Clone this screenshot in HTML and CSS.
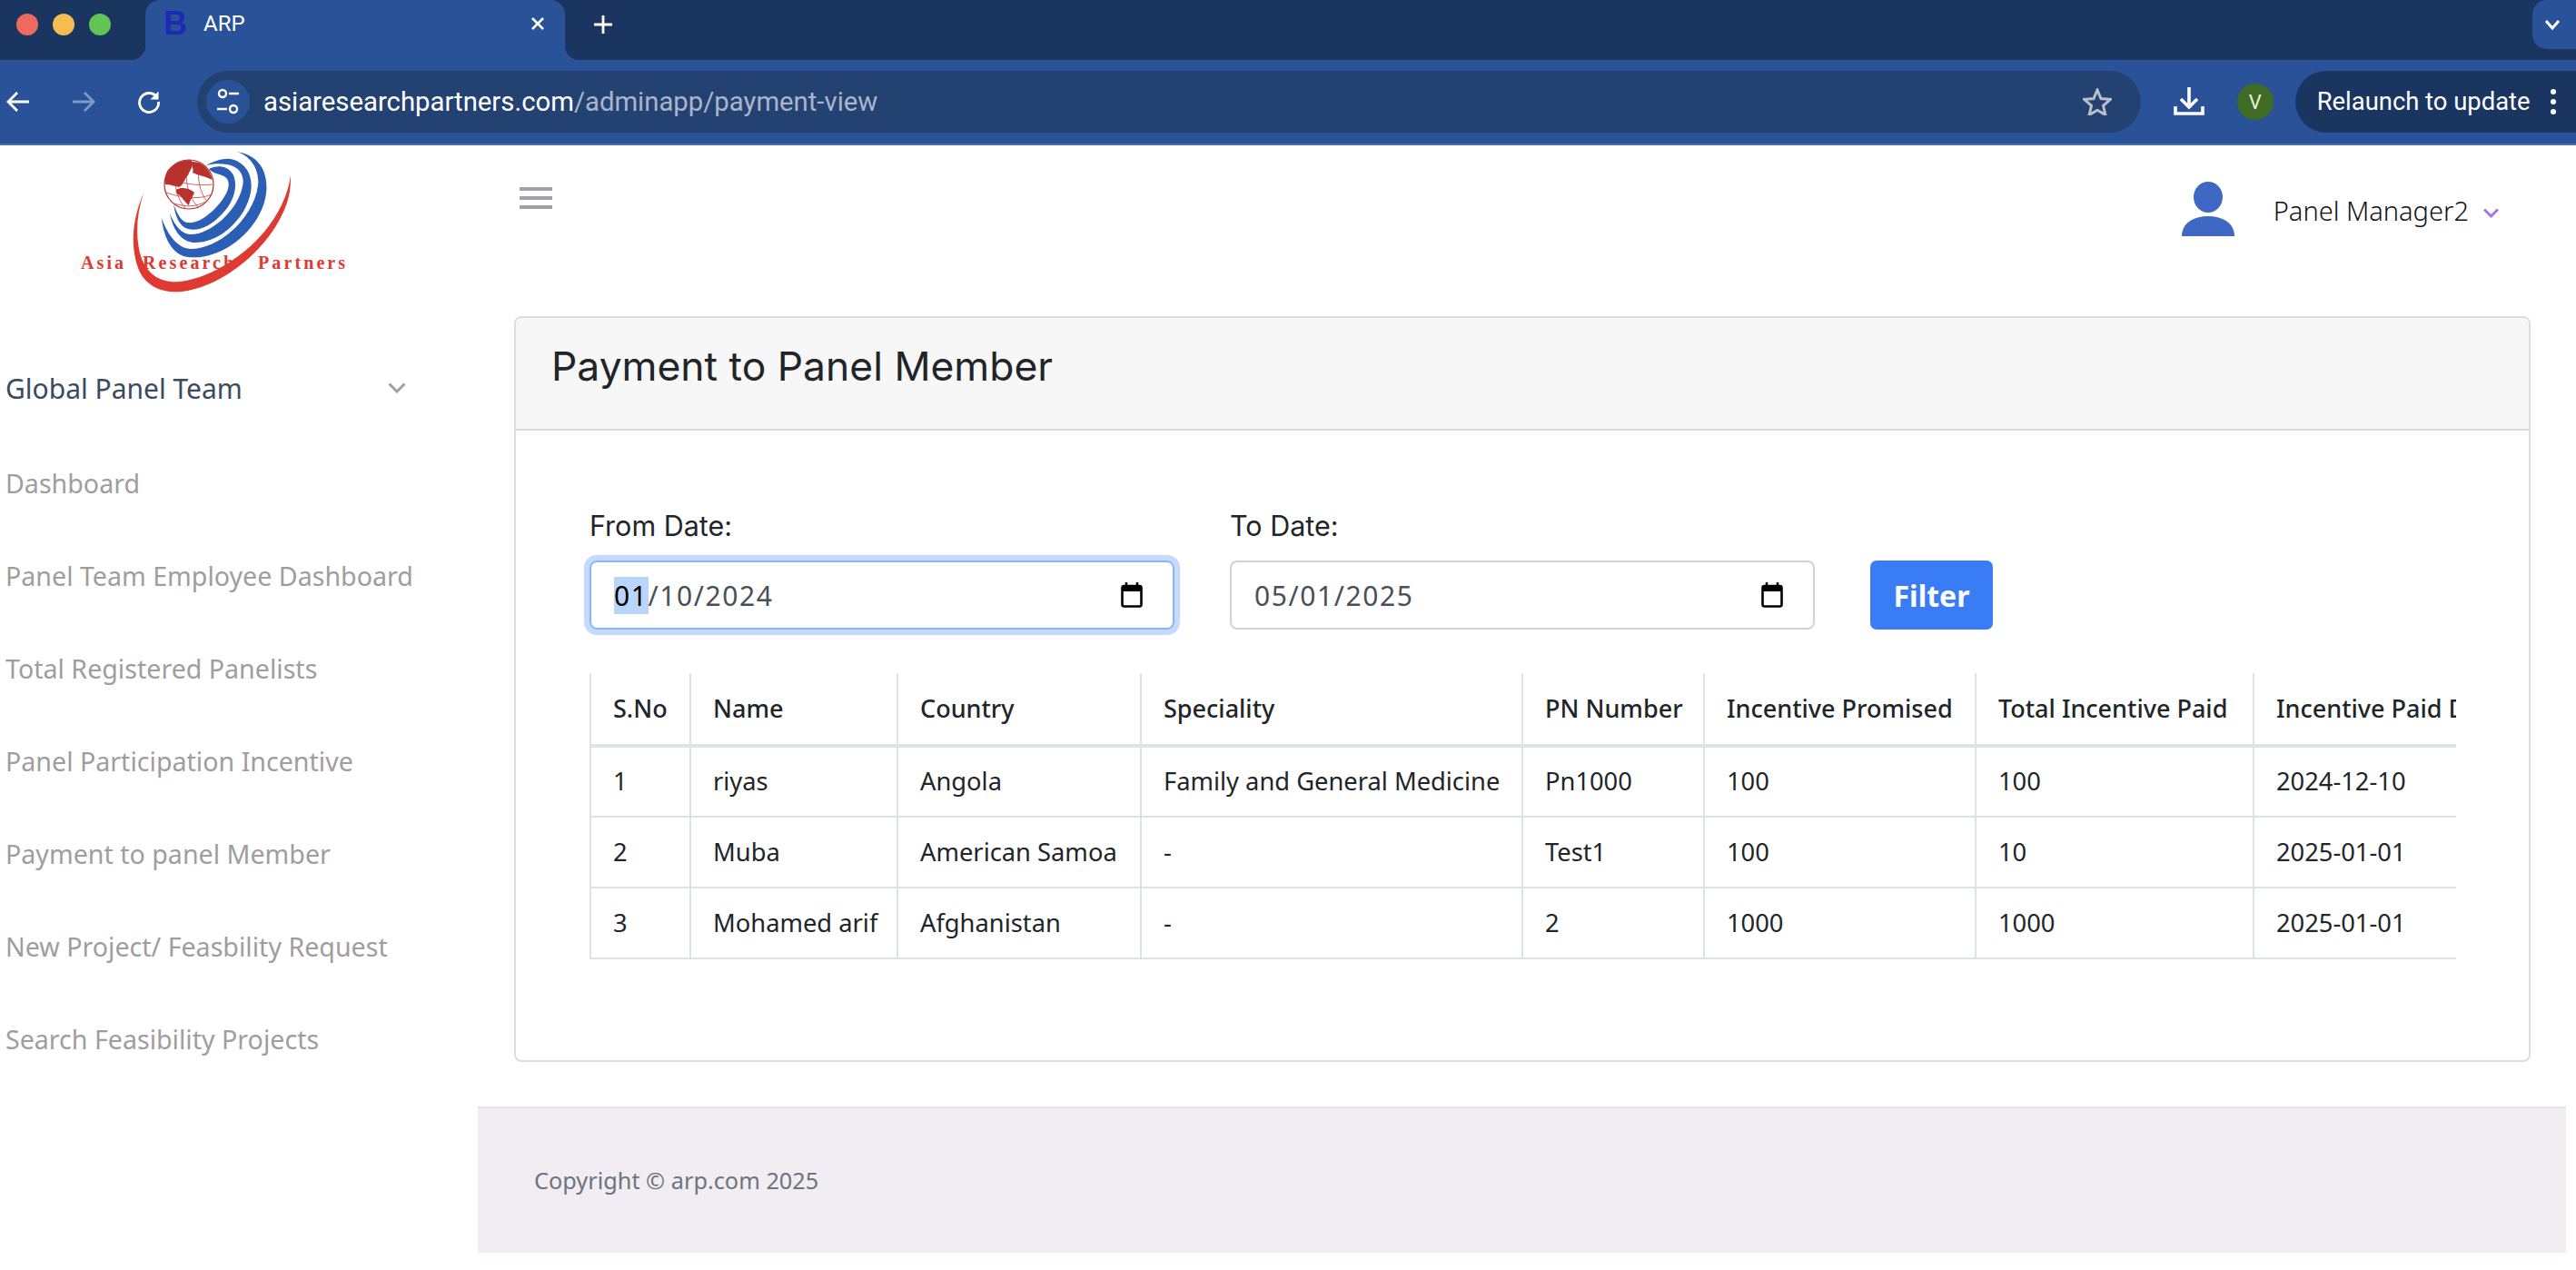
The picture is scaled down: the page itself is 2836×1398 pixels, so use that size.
FILE: index.html
```html
<!DOCTYPE html>
<html lang="en">
<head>
<meta charset="utf-8">
<title>ARP</title>
<link rel="stylesheet" href="styles.css">
</head>
<body>
<header class="chrome">
  <div class="tabstrip">
    <div class="lights"><span class="light red"></span><span class="light yellow"></span><span class="light green"></span></div>
    <div class="tab">
      <span class="favicon">B</span>
      <span class="tab-title">ARP</span>
      <svg class="tab-close" width="16" height="16" viewBox="0 0 16 16"><path d="M2 2l12 12M14 2L2 14" stroke="#fff" stroke-width="2.6" fill="none"/></svg>
    </div>
    <svg class="newtab" width="22" height="22" viewBox="0 0 22 22"><path d="M11 1v20M1 11h20" stroke="#fff" stroke-width="2.8"/></svg>
    <div class="tabsearch"><svg width="18" height="12" viewBox="0 0 18 12"><path d="M2 2l7 8 7-8" stroke="#fff" stroke-width="3" fill="none"/></svg></div>
  </div>
  <div class="toolbar">
    <svg class="navicon" width="26" height="26" viewBox="0 0 26 26"><path d="M25 13H3M12 3L2 13l10 10" stroke="#fff" stroke-width="2.8" fill="none"/></svg>
    <svg class="navicon dim" width="26" height="26" viewBox="0 0 26 26"><path d="M1 13h22M14 3l10 10-10 10" stroke="#7f9ac6" stroke-width="2.8" fill="none"/></svg>
    <svg class="navicon" width="26" height="26" viewBox="0 0 26 26"><path d="M22 8.5A10.5 10.5 0 1 0 23.500 13" stroke="#fff" stroke-width="2.8" fill="none"/><path d="M23.500 1.500v9h-9z" fill="#fff"/></svg>
    <div class="omnibox">
      <span class="siteinfo"><svg width="26" height="32" viewBox="0 0 26 32"><circle cx="7" cy="7" r="4" stroke="#fff" stroke-width="2.400" fill="none"/><path d="M14 7h11M1 24h11" stroke="#fff" stroke-width="2.600"/><circle cx="19" cy="24" r="4" stroke="#fff" stroke-width="2.400" fill="none"/></svg></span>
      <span class="url">asiaresearchpartners.com<span class="url-path">/adminapp/payment-view</span></span>
      <svg class="star" width="32" height="30" viewBox="0 0 32 30"><path d="M16 2l4 9.500 10.500.9-8 6.900 2.400 10.200L16 24.200 7.100 29.500l2.400-10.200-8-6.900L12 11.500z" fill="none" stroke="#b9bec8" stroke-width="3"/></svg>
    </div>
    <svg class="download" width="34" height="32" viewBox="0 0 34 32"><path d="M17 0v21M8 13l9 9 9-9" stroke="#fff" stroke-width="3.600" fill="none"/><path d="M2 21v8h30v-8" stroke="#fff" stroke-width="3.600" fill="none"/></svg>
    <span class="avatar">V</span>
    <div class="relaunch"><span>Relaunch to update</span><span class="dots"><i></i><i></i><i></i></span></div>
  </div>
</header>

<div class="app">
  <aside class="sidebar">
    <div class="logo">
      <svg width="330" height="172" viewBox="60 160 330 172">
        <path d="M260 167C284 170 296 188 293 213C288 252 245 287 207 283C190 281 180 262 178 240C184 258 196 274 210 274C243 274 280 238 284 204C286 187 276 171 260 167Z" fill="#2b5fb5"/>
        <path d="M227 182C238 176 250 173 258 176C271 181 279 193 276 212C270 242 241 268 213 267C199 266 190 252 187 235C193 250 201 258 210 258C233 258 262 231 267 205C270 193 263 183 250 181C243 180 235 180 227 182Z" fill="#2b5fb5"/>
        <path d="M230 186C240 181 252 183 257 193C262 205 258 222 244 236C232 249 218 255 207 252C198 250 193 238 191 225C196 238 201 245 207 245C220 247 240 230 249 213C254 203 252 195 244 193C240 191 235 191 230 186Z" fill="#2b5fb5"/>
        <path d="M158 213C146 240 143 270 152 295C160 316 180 323 200 321C245 316 300 272 316 223C320 212 320 200 320 193C317 216 304 243 282 265C256 291 224 307 198 310C178 312 162 303 155 282C149 262 150 236 158 213Z" fill="#de3a31"/>
        <circle cx="208" cy="203" r="27" fill="#fff" stroke="#b8312c" stroke-width="1.200"/>
        <g fill="none" stroke="#c9534e" stroke-width="0.900">
          <path d="M182 196C200 202 218 205 234 203M183 212C200 218 220 220 233 214M192 224C204 228 216 228 226 222"/>
          <path d="M196 178C190 195 192 215 204 229M208 176C202 195 206 215 218 228M220 179C216 195 220 212 228 222"/>
        </g>
        <path d="M185 187C192 179 203 176 210 176C215 181 209 187 207 193C203 196 203 203 197 206C192 205 188 203 182 203C181 197 182 192 185 187Z" fill="#b8312c"/>
        <path d="M211 178C222 177 231 186 234 198C226 194 218 193 212 190C214 186 210 182 211 178Z" fill="#b8312c"/>
        <path d="M194 209C200 205 210 208 214 212C212 217 209 220 208 226C204 223 200 217 198 215C195 214 193 212 194 209Z" fill="#b8312c"/>
        <text class="logo-text" x="89" y="296">Asia</text>
        <text class="logo-text" x="157" y="296">Research</text>
        <text class="logo-text" x="284" y="296">Partners</text>
      </svg>
    </div>
    <nav class="menu">
      <div class="menu-head"><span>Global Panel Team</span><svg width="20" height="12" viewBox="0 0 20 12"><path d="M1.500 1.500L10 10l8.500-8.500" stroke="#a0a0a2" stroke-width="3" fill="none"/></svg></div>
      <a class="menu-item">Dashboard</a>
      <a class="menu-item">Panel Team Employee Dashboard</a>
      <a class="menu-item">Total Registered Panelists</a>
      <a class="menu-item">Panel Participation Incentive</a>
      <a class="menu-item">Payment to panel Member</a>
      <a class="menu-item">New Project/ Feasbility Request</a>
      <a class="menu-item">Search Feasibility Projects</a>
    </nav>
  </aside>

  <main class="main">
    <div class="topbar">
      <div class="burger"><i></i><i></i><i></i></div>
      <div class="user">
        <svg width="58" height="60" viewBox="0 0 58 60"><ellipse cx="29" cy="17" rx="16" ry="17" fill="#3f67c4"/><path d="M0 60C0 46 12 38 29 38S58 46 58 60Z" fill="#3f67c4"/></svg>
        <span class="user-name">Panel Manager2</span>
        <svg width="17" height="11" viewBox="0 0 17 11"><path d="M1 1.500l7.500 7.500L16 1.500" stroke="#a874ee" stroke-width="3" fill="none"/></svg>
      </div>
    </div>

    <section class="card">
      <div class="card-head"><h1>Payment to Panel Member</h1></div>
      <div class="card-body">
        <form class="filters">
          <div class="field">
            <label class="field-label">From Date:</label>
            <div class="date focus">
              <span class="date-text"><mark>01</mark>/10/2024</span>
              <svg width="24" height="28" viewBox="0 0 24 28"><path d="M6 0v5M18 0v5" stroke="#000" stroke-width="2.500"/><rect x="1.500" y="4" width="21" height="22.500" rx="2" fill="none" stroke="#000" stroke-width="2.600"/><rect x="1.500" y="4" width="21" height="6" fill="#000"/></svg>
            </div>
          </div>
          <div class="field">
            <label class="field-label">To Date:</label>
            <div class="date">
              <span class="date-text">05/01/2025</span>
              <svg width="24" height="28" viewBox="0 0 24 28"><path d="M6 0v5M18 0v5" stroke="#000" stroke-width="2.500"/><rect x="1.500" y="4" width="21" height="22.500" rx="2" fill="none" stroke="#000" stroke-width="2.600"/><rect x="1.500" y="4" width="21" height="6" fill="#000"/></svg>
            </div>
          </div>
          <button class="filter-btn" type="button">Filter</button>
        </form>
        <div class="table-wrap">
          <table class="data">
            <colgroup>
              <col class="c1"><col class="c2"><col class="c3"><col class="c4"><col class="c5"><col class="c6"><col class="c7"><col class="c8">
            </colgroup>
            <thead>
              <tr><th>S.No</th><th>Name</th><th>Country</th><th>Speciality</th><th>PN Number</th><th>Incentive Promised</th><th>Total Incentive Paid</th><th>Incentive Paid Date</th></tr>
            </thead>
            <tbody>
              <tr><td>1</td><td>riyas</td><td>Angola</td><td>Family and General Medicine</td><td>Pn1000</td><td>100</td><td>100</td><td>2024-12-10</td></tr>
              <tr><td>2</td><td>Muba</td><td>American Samoa</td><td>-</td><td>Test1</td><td>100</td><td>10</td><td>2025-01-01</td></tr>
              <tr><td>3</td><td>Mohamed arif</td><td>Afghanistan</td><td>-</td><td>2</td><td>1000</td><td>1000</td><td>2025-01-01</td></tr>
            </tbody>
          </table>
        </div>
      </div>
    </section>

    <footer class="footer">Copyright © arp.com 2025</footer>
  </main>
</div>
</body>
</html>
```
FILE: styles.css
```css
* { box-sizing: border-box; }
html, body { margin: 0; height: 100%; overflow: hidden; background: #fff; }
body { font-family: "Noto Sans", sans-serif; color: #212529; }

/* Browser chrome */
.chrome { height: 160px; background: #2a5298; border-bottom: 2px solid #4a70a8; }
.tabstrip { height: 66px; background: #1a3560; display: flex; align-items: flex-start; padding-left: 18px; }
.lights { display: flex; gap: 16px; width: 142px; padding-top: 15px; }
.light { width: 24px; height: 24px; border-radius: 50%; }
.red { background: #ee6a5f; }
.yellow { background: #f5bd4f; }
.green { background: #61c454; }
.tab { position: relative; width: 462px; height: 66px; background: #2a5298; border-radius: 16px 16px 0 0; display: flex; align-items: center; padding: 0 22px 14px 20px; }
.tab::before, .tab::after { content: ""; position: absolute; bottom: 0; width: 16px; height: 16px; }
.tab::before { left: -16px; background: radial-gradient(circle at 0 0, #1a3560 16px, #2a5298 16.5px); }
.tab::after { right: -16px; background: radial-gradient(circle at 100% 0, #1a3560 16px, #2a5298 16.5px); }
.favicon { font: 700 36px "Liberation Sans", sans-serif; color: #1c2bb5; width: 44px; }
.tab-title { font: 400 24px Roboto, sans-serif; color: #fff; flex: 1; }
.newtab { margin: 16px 0 0 31px; }
.tabsearch { margin-left: auto; width: 48px; height: 54px; background: #2a5298; border-radius: 16px 0 0 16px; display: flex; align-items: center; justify-content: center; padding-right: 4px; }

.toolbar { height: 92px; display: flex; align-items: center; padding-left: 7px; }
.navicon { margin-right: 46px; flex: none; }
.omnibox { width: 2145px; height: 68px; margin-left: -6px; background: #234272; border-radius: 34px; display: flex; align-items: center; padding: 0 32px 0 10px; }
.siteinfo { width: 48px; height: 48px; border-radius: 50%; background: #2a5298; display: flex; align-items: center; justify-content: center; flex: none; }
.url { font: 400 29.3px Roboto, sans-serif; color: #fff; margin-left: 15px; flex: 1; white-space: nowrap; }
.url-path { color: #a9b5ca; }
.download { margin-left: 36px; flex: none; }
.avatar { width: 40px; height: 40px; border-radius: 50%; background: #3f6b24; color: #e6efdc; font: 400 22px Roboto, sans-serif; display: flex; align-items: center; justify-content: center; margin-left: 36px; flex: none; }
.relaunch { width: 310px; height: 68px; margin-left: 24px; background: #1a3560; border-radius: 34px 0 0 34px; display: flex; align-items: center; padding-left: 24px; color: #fff; font: 400 27.4px Roboto, sans-serif; white-space: nowrap; }
.dots { display: flex; flex-direction: column; gap: 5px; margin-left: 22px; }
.dots i { width: 6px; height: 6px; border-radius: 50%; background: #fff; }

/* App */
.app { display: flex; height: 1238px; }
.sidebar { width: 526px; flex: none; }
.logo { height: 172px; }
.logo svg { display: block; margin-left: 60px; }
.logo-text { font: 700 20px "Liberation Serif", serif; letter-spacing: 3.100px; fill: #de3a31; }
.menu { padding: 65px 0 0 6px; display: flex; flex-direction: column; }
.menu-head { display: flex; align-items: center; justify-content: space-between; width: 441px; height: 60px; font-size: 30px; color: #3a4a60; margin-bottom: 44px; }
.menu-item { height: 60px; margin-bottom: 42px; display: flex; align-items: center; font-size: 28.600px; color: #a19c9e; white-space: nowrap; }

.main { width: 2299px; flex: none; display: flex; flex-direction: column; }
.topbar { height: 188px; display: flex; justify-content: space-between; padding: 46px 74px 0 46px; }
.burger { display: flex; flex-direction: column; gap: 6px; width: 36px; }
.burger i { display: block; height: 4px; background: #a0a0a8; }
.user { display: flex; align-items: flex-start; height: 60px; margin-top: -6px; }
.user-name { font-size: 29px; font-weight: 300; color: #111; margin: 12px 16px 0 43px; line-height: 40px; white-space: nowrap; }
.user svg:last-child { margin-top: 29px; }

.card { margin: 0 39px 49px 40px; height: 821px; border: 2px solid #dcdde0; border-radius: 8px; overflow: hidden; flex: none; }
.card-head { height: 124px; background: #f7f7f7; border-bottom: 2px solid #dadada; display: flex; align-items: center; padding: 0 0 16px 39px; }
.card-head h1 { margin: 0; font: 400 44.400px Inter, sans-serif; color: #212529; }
.card-body { padding: 85px 80px 0 81px; }
.filters { display: flex; align-items: flex-end; gap: 61px; }
.field { width: 644px; display: flex; flex-direction: column; }
.field-label { font: 400 30.500px Inter, sans-serif; color: #212529; line-height: 40px; margin-bottom: 18px; }
.date { height: 76px; border: 2px solid #ced4da; border-radius: 8px; display: flex; align-items: center; justify-content: space-between; padding: 0 33px 0 25px; }
.date.focus { border-color: #86b7fe; box-shadow: 0 0 0 6px #c5daff; }
.date-text { font-size: 30px; color: #495057; letter-spacing: 1.600px; }
.date-text mark { background: #b9d5f9; color: #000; }
.filter-btn { width: 135px; height: 76px; border: 0; border-radius: 7px; background: #3a7bf6; color: #fff; font: 700 32px "Noto Sans", sans-serif; }

.table-wrap { margin-top: 48px; width: 2055px; overflow: hidden; }
.data { border-collapse: collapse; table-layout: fixed; width: 2200px; font-size: 27.300px; color: #212529; }
.c1 { width: 110px; } .c2 { width: 228px; } .c3 { width: 268px; } .c4 { width: 420px; } .c5 { width: 200px; } .c6 { width: 299px; } .c7 { width: 306px; } .c8 { width: 369px; }
.data th, .data td { text-align: left; white-space: nowrap; padding: 0 0 2px 24px; border-left: 2px solid #dee2e6; border-bottom: 2px solid #dee2e6; }
.data th { height: 80px; font-weight: 500; font-size: 27px; border-bottom-width: 4px; }
.data td { height: 78px; }

.footer { height: 161px; flex: none; background: #f1edf3; border-top: 2px solid #e6e2e8; display: flex; align-items: center; padding: 0 0 2px 62px; font-size: 25.300px; color: #6c757d; }
```
